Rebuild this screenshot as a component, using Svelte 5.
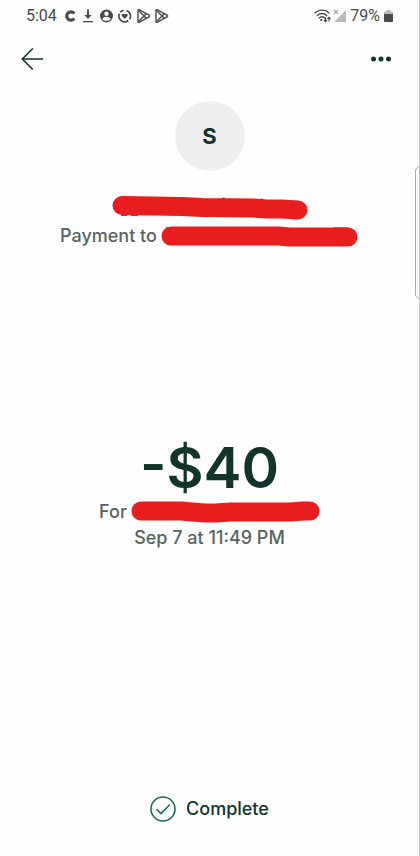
<script lang="ts">
  const time: string = "5:04";
  const battery: number = 79;
  const initial: string = "S";
  const amount: string = "-$40";
  const date: string = "Sep 7 at 11:49 PM";
  const status: string = "Complete";
</script>

<div class="screen">
  <div class="statusbar">
    <div class="left">
      <span class="clock">{time}</span>
      <svg width="106" height="16" viewBox="0 0 106 16" fill="none" stroke="#4a4a4a">
        <!-- letter-shaped app mark -->
        <path d="M10.300 5.500A4.200 4.200 0 1 0 10.300 10.500" stroke-width="3.200" />
        <!-- download -->
        <path d="M24 1.500V8" stroke-width="2" />
        <path d="M20.500 7h7L24 11z" fill="#4a4a4a" stroke="none" />
        <path d="M19 13.700h10" stroke-width="1.300" />
        <!-- account -->
        <circle cx="42.500" cy="8" r="6.500" fill="#4a4a4a" stroke="none" />
        <circle cx="42.500" cy="5.700" r="2.200" fill="#fff" stroke="none" />
        <path d="M38.300 11.200c.5-3.400 7.900-3.400 8.400 0-2 2-6.400 2-8.400 0z" fill="#fff" stroke="none" />
        <!-- heart in a broken ring -->
        <path d="M62.500 2.500A5.800 5.800 0 0 1 65.500 11.300M64.300 12.500A5.800 5.800 0 0 1 55.300 5.800M56.300 4.200A5.800 5.800 0 0 1 59.500 2.400" stroke-width="1.700" />
        <path d="M60.700 10.900 57.900 8c-1-2.100 1.800-3.100 2.800-1.400 1-1.700 3.800-.7 2.800 1.400z" fill="#4a4a4a" stroke="none" />
        <!-- play store, twice -->
        {#each [73, 91] as x}
          <g transform="translate({x} 0)" stroke-width="1.400" stroke-linejoin="round">
            <path d="M1 2.200v11.600l1 .5L12.500 8.700V7.300L2 1.700z" />
            <path d="M1.300 2.200 9.500 10.400M1.300 13.800 9.500 5.600" />
          </g>
        {/each}
      </svg>
    </div>
    <div class="right">
      <svg width="32" height="16" viewBox="0 0 32 16" fill="none">
        <g stroke="#4a4a4a" stroke-width="1.400">
          <path d="M.6 5.400C4.500 1 11.500 1 15.400 5.400M2.800 7.900C5.500 4.600 10.500 4.600 13.200 7.900M5 10.200C6.700 8.200 9.300 8.200 11 10.200" />
          <path d="M11.500 9.500v4M10 12l1.500 1.600 1.500-1.600M15 13.500V9.500M13.500 11l1.500-1.600 1.500 1.600" stroke-width="1.100" />
        </g>
        <path d="M7 13.300 5.900 12a1.500 1.500 0 0 1 2.800 0z" fill="#4a4a4a" />
        <path d="M32 2v12H20z" fill="#b8b8b8" />
        <path d="M20 2l4 4M24 2l-4 4" stroke="#aaa" stroke-width="1.400" />
      </svg>
      <span class="percent">{battery}%</span>
      <svg width="9" height="14" viewBox="0 0 9 14">
        <path d="M2.500 1h4v1.500H8a1 1 0 0 1 1 1V5H0V3.500a1 1 0 0 1 1-1h1.500z" fill="#b8b8b8" />
        <path d="M0 5h9v7a1 1 0 0 1-1 1H1a1 1 0 0 1-1-1z" fill="#4a4a4a" />
      </svg>
    </div>
  </div>

  <nav>
    <button aria-label="Back">
      <svg width="24" height="24" viewBox="0 0 24 24" fill="none" stroke="#12352b" stroke-width="1.600">
        <path d="M12.800 1.500 2.300 12l10.500 10.500M2.300 12H23" />
      </svg>
    </button>
    <button aria-label="More options">
      <svg width="24" height="24" viewBox="0 0 24 24" fill="#12352b">
        <circle cx="4.500" cy="12" r="2.500" />
        <circle cx="12" cy="12" r="2.500" />
        <circle cx="19.500" cy="12" r="2.500" />
      </svg>
    </button>
  </nav>

  <header>
    <div class="avatar">{initial}</div>
    <svg class="name" width="196" height="26" viewBox="0 0 196 26" fill="none">
      <path d="M9 20h6M19 20h7M110 3.500h3M148 4.500h3" stroke="#12352b" stroke-width="1.600" />
      <path d="M10 10.500 70 11.500 90 12.500 140 13 155 14H170L186 15" stroke="#e81d1d" stroke-width="19" stroke-linecap="round" stroke-linejoin="round" />
    </svg>
    <div class="row">
      <span>Payment to</span>
      <svg width="198" height="26" viewBox="0 0 198 26" fill="none">
        <path d="M5 4.500h3M173 4.800h14" stroke="#56655f" stroke-width="1" />
        <path d="M10 13H118L128 14H187" stroke="#e81d1d" stroke-width="19" stroke-linecap="round" stroke-linejoin="round" />
      </svg>
    </div>
  </header>

  <main>
    <h1>{amount}</h1>
    <div class="row">
      <span>For</span>
      <svg width="189" height="26" viewBox="0 0 189 26" fill="none">
        <path d="M10 12H50C62 13 70 14 80 14S92 13 100 13H160L172 12H179" stroke="#e81d1d" stroke-width="19" stroke-linecap="round" stroke-linejoin="round" />
      </svg>
    </div>
    <div class="date">{date}</div>
  </main>

  <footer>
    <svg width="26" height="26" viewBox="0 0 26 26" fill="none" stroke="#1c6b50" stroke-width="1.600">
      <circle cx="13" cy="13" r="12" />
      <path d="M6.500 13 11 17.500 20 8.500" />
    </svg>
    <span>{status}</span>
  </footer>

  <div class="edge"></div>
</div>

<style>
  :global(body) {
    margin: 0;
    background: #fefefe;
  }

  .screen {
    position: relative;
    box-sizing: border-box;
    display: grid;
    grid-template-columns: 100%;
    grid-template-rows: auto auto auto 10fr auto 13fr auto;
    min-height: 100vh;
    overflow: hidden;
    border-right: 1px solid #c4c4c4;
    color: #56655f;
    font-family: Inter, "Liberation Sans", sans-serif;
    font-size: 18px;
    font-weight: 500;
    line-height: 26px;
  }

  svg {
    display: block;
    flex: none;
  }

  .statusbar {
    display: flex;
    justify-content: space-between;
    align-items: center;
    height: 32px;
    padding: 0 26px;
    color: #4a4a4a;
    font-family: Roboto, sans-serif;
    font-size: 16px;
    font-weight: 400;
  }

  .left,
  .right {
    display: flex;
    align-items: center;
  }

  .left {
    gap: 7px;
  }

  .right {
    gap: 4px;
  }

  nav {
    display: flex;
    justify-content: space-between;
    padding: 7px 20px;
  }

  button {
    padding: 8px 0;
    border: none;
    background: none;
    cursor: pointer;
  }

  nav button:last-child {
    padding-right: 6px;
  }

  header {
    display: flex;
    flex-direction: column;
    align-items: center;
    padding-top: 15px;
  }

  .avatar {
    width: 70px;
    border-radius: 50%;
    background: #efefef;
    color: #12352b;
    font-size: 22px;
    font-weight: 700;
    line-height: 70px;
    text-align: center;
  }

  .name {
    margin: 24px 0 2px;
  }

  .row {
    display: flex;
    justify-content: center;
    gap: 4px;
  }

  main {
    grid-row: 5;
    text-align: center;
  }

  h1 {
    margin: 0;
    color: #12352b;
    font-size: 57px;
    font-weight: 600;
    line-height: 62px;
  }

  footer {
    grid-row: 7;
    display: flex;
    justify-content: center;
    gap: 10px;
    padding-bottom: 34px;
    color: #12352b;
  }

  .edge {
    position: absolute;
    top: 166px;
    right: -6px;
    width: 8px;
    height: 131px;
    border: 1px solid #a8a8a8;
    border-radius: 6px;
    background: #fefefe;
  }
</style>
